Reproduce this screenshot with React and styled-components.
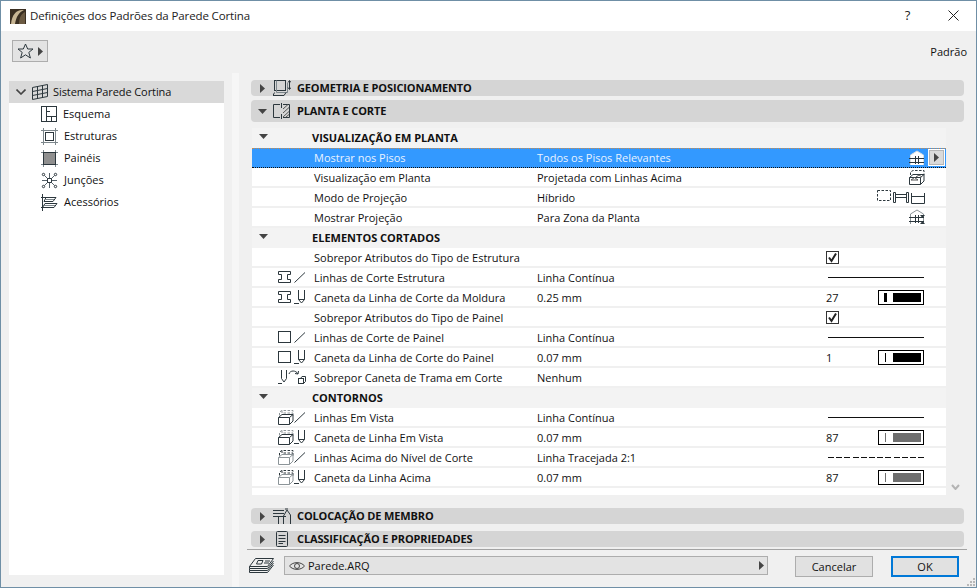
import React from "react";
import styled, { createGlobalStyle } from "styled-components";

const INK = "#2c373d";
const FONT = `"Open Sans", "Noto Sans", "Liberation Sans", sans-serif`;

const GlobalStyle = createGlobalStyle`
  html, body {
    margin: 0;
    padding: 0;
    background: #f0f0f0;
  }
  body {
    font-family: ${FONT};
    font-size: 11px;
    color: #111;
  }
`;

const Window = styled.div`
  width: 977px;
  height: 588px;
  box-sizing: border-box;
  border: 1px solid #6f8fa6;
  background: #f0f0f0;
  display: flex;
  flex-direction: column;
  overflow: hidden;
  position: relative;
`;
const TitleBar = styled.div`
  height: 30px;
  flex: none;
  background: #fff;
  display: flex;
  align-items: center;
  padding-left: 9px;
`;
const TitleText = styled.div`
  font-size: 11.5px;
  letter-spacing: -0.12px;
  margin-left: 4px;
  padding-bottom: 2px;
  flex: 1;
  color: #222;
`;
const HelpMark = styled.div`
  font-size: 13px;
  width: 46px;
  padding-left: 1px;
  padding-bottom: 2px;
  box-sizing: border-box;
  text-align: center;
  color: #222;
`;
const CloseMark = styled.div`
  width: 46px;
  display: flex;
  justify-content: center;
  padding-bottom: 2px;
`;
const Toolbar = styled.div`
  height: 42px;
  flex: none;
  display: flex;
  justify-content: space-between;
  padding: 9px 9px 0 11px;
  box-sizing: border-box;
`;
const FavButton = styled.div`
  width: 36px;
  height: 22px;
  box-sizing: border-box;
  border: 1px solid #adadad;
  background: #e3e3e3;
  display: flex;
  align-items: center;
  padding-left: 4px;
  gap: 4px;
`;
const DefaultLabel = styled.div`
  margin-top: 4px;
  font-size: 11px;
`;
const Main = styled.div`
  flex: 1;
  display: flex;
  padding-left: 8px;
  min-height: 0;
`;
const Sidebar = styled.div`
  width: 215px;
  flex: none;
  margin: 8px 0 12px;
  background: #fff;
`;
const TreeRow = styled.div`
  height: 22px;
  display: flex;
  align-items: center;
  box-sizing: border-box;
  padding-left: ${(p) => (p.$child ? "32px" : "7px")};
  background: ${(p) => (p.$root ? "#d9d9d9" : "transparent")};
  gap: ${(p) => (p.$child ? "6px" : "0")};
`;
const TreeLabel = styled.span`
  margin-left: ${(p) => (p.$root ? "5px" : "0")};
  letter-spacing: ${(p) => (p.$root ? "-0.08px" : "0")};
  padding-bottom: 2px;
`;
const Splitter = styled.div`
  width: 7px;
  margin-left: 8px;
  flex: none;
  background: #f6f6f6;
`;
const Content = styled.div`
  width: 720px;
  margin-left: 8px;
  padding-top: 7px;
  box-sizing: border-box;
  display: flex;
  flex-direction: column;
`;
const PanelHeader = styled.div`
  height: ${(p) => (p.$open ? "22px" : "16px")};
  margin: ${(p) => p.$margin || "0"};
  margin-left: 4px;
  width: 713px;
  flex: none;
  background: #d5d5d5;
  border-radius: 4px;
  display: flex;
  align-items: center;
  position: relative;
  font-weight: 700;
  font-size: 11px;
  color: #111;
`;
const HeaderArrow = styled.div`
  width: 22px;
  flex: none;
  display: flex;
  justify-content: center;
`;
const HeaderIcon = styled.div`
  width: 24px;
  flex: none;
  display: flex;
  justify-content: ${(p) => (p.$center ? "center" : "flex-start")};
  padding-right: ${(p) => (p.$center ? "6px" : "0")};
  box-sizing: border-box;
`;
const HeaderText = styled.span`
  letter-spacing: -0.13px;
  padding-bottom: 2px;
`;
const Table = styled.div`
  width: 694px;
  height: 367px;
  margin: 6px 0 13px 5px;
  flex: none;
  background: #fff;
`;
const SectionRow = styled.div`
  height: 20px;
  background: #f3f3f3;
  display: grid;
  grid-template-columns: 60px 1fr;
  align-items: center;
  font-weight: 700;
`;
const SectionArrow = styled.div`
  padding: 0 0 4px 7px;
  display: flex;
`;
const SectionText = styled.span`
  padding-bottom: 2px;
`;
const Row = styled.div`
  height: 20px;
  box-sizing: border-box;
  display: grid;
  grid-template-columns: 62px 223px 289px 52px 1fr;
  align-items: center;
  color: ${(p) => (p.$selected ? "#e9f3ff" : "#111")};
  background: ${(p) => (p.$selected ? "#3399ff" : "#fff")};
  border-bottom: ${(p) => (p.$selected ? "1px dotted #111" : "2px solid #f0f0f0")};
  border-top: ${(p) => (p.$selected ? "1px dotted #c98a4a" : "0")};
  position: relative;
  & > span {
    padding-bottom: ${(p) => (p.$selected ? "2px" : "0")};
  }
`;
const RowIcons = styled.div`
  display: flex;
  justify-content: flex-end;
  align-items: center;
  gap: ${(p) => (p.$tight ? "0" : "3px")};
  padding-right: 8px;
  height: 18px;
`;
const ExtraCell = styled.div`
  display: flex;
  align-items: center;
  height: 18px;
`;
const WideCell = styled.div`
  grid-column: 4 / 6;
  display: flex;
  justify-content: ${(p) => (p.$right ? "flex-end" : "flex-start")};
  align-items: center;
  gap: 2px;
  height: 18px;
  padding-right: ${(p) => (p.$right ? "21px" : "0")};
`;
const Checkbox = styled.div`
  width: 13px;
  height: 13px;
  box-sizing: border-box;
  border: 1px solid #333;
  background: #fff;
  display: flex;
  align-items: center;
  justify-content: center;
`;
const LineSample = styled.div`
  width: 96px;
  height: 1px;
  margin-left: 2px;
  background: ${(p) =>
    p.$dashed
      ? "repeating-linear-gradient(90deg, #111 0 6px, transparent 6px 8.2px)"
      : "#111"};
`;
const PenBox = styled.div`
  width: 46px;
  height: 15px;
  box-sizing: border-box;
  border: 1px solid #000;
  display: flex;
  align-items: center;
  padding: 0 2px 0 5px;
  background: #fff;
`;
const PenThin = styled.div`
  width: ${(p) => p.$w}px;
  margin-left: ${(p) => (p.$w === 1 ? "1px" : "0")};
  height: 9px;
  background: ${(p) => p.$color};
`;
const PenThick = styled.div`
  width: 28px;
  height: 9px;
  margin-left: auto;
  background: ${(p) => p.$color};
`;
const ExpandButton = styled.div`
  position: absolute;
  right: 1px;
  top: 0;
  width: 17px;
  height: 17px;
  box-sizing: border-box;
  background: #dadada;
  border: 1px solid #fff;
  outline: 1px solid #b5b5b5;
  outline-offset: -2px;
  display: flex;
  align-items: center;
  justify-content: center;
`;
const ScrollChevron = styled.div`
  position: absolute;
  left: 950px;
  top: 483px;
  display: flex;
`;
const Footer = styled.div`
  border-top: 1px solid #a3a3a3;
  margin-top: 2px;
  height: 37px;
  flex: none;
  display: flex;
  padding-top: 6px;
  box-sizing: border-box;
  align-items: flex-start;
`;
const LayerIcon = styled.div`
  width: 37px;
  padding-left: 2px;
  box-sizing: border-box;
  flex: none;
  margin-top: 2px;
`;
const LayerSelect = styled.div`
  width: 484px;
  height: 19px;
  box-sizing: border-box;
  border: 1px solid #adadad;
  background: #e3e3e3;
  display: flex;
  align-items: center;
  padding: 0 3px 0 4px;
  gap: 3px;
`;
const LayerName = styled.span`
  flex: 1;
  padding-bottom: 1px;
`;
const DialogButton = styled.div`
  height: 21px;
  box-sizing: border-box;
  width: ${(p) => p.$w}px;
  margin-left: ${(p) => p.$left}px;
  background: #e1e1e1;
  border: ${(p) => (p.$primary ? "2px solid #0078d7" : "1px solid #adadad")};
  display: flex;
  align-items: center;
  justify-content: center;
`;
const Grip = styled.div`
  position: absolute;
  right: 1px;
  bottom: 1px;
  display: flex;
`;

const Ic = ({ w, h, children, style }) => (
  <svg width={w} height={h} viewBox={`0 0 ${w} ${h}`} fill="none" stroke={INK} strokeWidth="1" style={{ display: "block", flex: "none", ...style }}>
    {children}
  </svg>
);

const TriRight = () => (
  <Ic w={5} h={9}><path d="M0 0L5 4.5L0 9Z" fill="#444" stroke="none" /></Ic>
);
const TriDown = () => (
  <Ic w={9} h={5}><path d="M0 0H9L4.5 5Z" fill="#444" stroke="none" /></Ic>
);

const Logo = () => (
  <svg width="16" height="15" viewBox="0 0 16 15" style={{ display: "block", flex: "none" }}>
    <rect width="16" height="15" fill="#3a2f22" />
    <path d="M1 15C2 6 6 1 12 1L14 1C9 3 6 8 5 15Z" fill="#c8b694" />
    <path d="M9 15C9 9 11 5 15 3V15Z" fill="#6b5a42" />
  </svg>
);

const Star = () => (
  <Ic w={17} h={16}>
    <path d="M8.5 1L10.7 6H16L11.8 9.4L13.4 15L8.5 11.8L3.6 15L5.2 9.4L1 6H6.3Z" />
  </Ic>
);

const WallIcon = () => (
  <Ic w={16} h={16}>
    <path d="M.5 3.5L15.5.5V12.5L.5 15.5Z" />
    <path d="M5.5 2.5V14.5M10.5 1.5V13.5M.5 7.5L15.5 4.5M.5 11.5L15.5 8.5" />
  </Ic>
);
const SchemeIcon = () => (
  <Ic w={16} h={16}>
    <rect x=".5" y=".5" width="15" height="15" />
    <path d="M5.5 .5V15.5M5.5 10.5H15.5M10.5 10.5V15.5M5.5 5.5H9" />
  </Ic>
);
const FrameIcon = () => (
  <Ic w={17} h={17}>
    <rect x="2.5" y="2.5" width="12" height="12" />
    <rect x="4.5" y="4.5" width="8" height="8" />
    <path d="M2.5 0V17M14.5 0V17M0 2.5H17M0 14.5H17" stroke="#7d878c" />
  </Ic>
);
const PanelIcon = () => (
  <Ic w={17} h={17}>
    <rect x="2.5" y="2.5" width="12" height="12" fill="#8f8f8f" />
    <path d="M2.5 0V2M14.5 0V2M2.5 15V17M14.5 15V17M0 2.5H2M15 2.5H17M0 14.5H2M15 14.5H17" stroke="#7d878c" />
  </Ic>
);
const JointIcon = () => (
  <Ic w={17} h={17}>
    <rect x="6.5" y="6.5" width="4" height="4" />
    <path d="M8.5 1V6M8.5 11V16M1 8.5H6M11 8.5H16M6.5 6.5L3.5 3.5M10.5 6.5L13.5 3.5M6.5 10.5L3.5 13.5M10.5 10.5L13.5 13.5" stroke="#56626a" />
    <circle cx="2.5" cy="2.5" r="1.2" />
    <circle cx="14.5" cy="2.5" r="1.2" />
    <circle cx="2.5" cy="14.5" r="1.2" />
    <circle cx="14.5" cy="14.5" r="1.2" />
  </Ic>
);
const AccessoryIcon = () => (
  <Ic w={17} h={17}>
    <path d="M1.5 0V17M0 3.5H15L12 7.5H3M3 7.5L5 3.5M0 13.5H13L16 9.5H4L1.5 13.5" />
    <path d="M4 5.5H13M3 11.5H14" stroke="#7d878c" />
  </Ic>
);
const GeoIcon = () => (
  <Ic w={18} h={16}>
    <rect x="1.5" y=".5" width="11" height="10" />
    <path d="M3.5 .5V12.5H14.5V3" stroke="#7d878c" />
    <path d="M1.5 12.5L0 15.5H11L13 12.5" />
    <path d="M16.5 1V9M15 2.5L16.5 .5L18 2.5M15 7.5L16.5 9.5L18 7.5" />
  </Ic>
);
const PlanIcon = () => (
  <Ic w={18} h={16}>
    <path d="M7 1.5H.5V14.5H7M10 1.5H16.5V14.5H10" />
    <path d="M8.5 0V5M8.5 11V16" />
    <path d="M10 6L15 1.5M10 10L16 4.5M10 14L16 8.5M13 14L16 11.5" stroke="#555" />
  </Ic>
);
const PlaceIcon = () => (
  <Ic w={20} h={16}>
    <path d="M0 2.5H11M0 5.5H11M0 8.5H13" />
    <path d="M5.5 8V16M10.5 8V16M17.5 7V16M10.5 8L14 2L17.5 7M12 1H15" />
  </Ic>
);
const DocIcon = () => (
  <Ic w={12} h={16}>
    <rect x=".5" y=".5" width="11" height="15" rx="1" />
    <path d="M2.5 4.5H9.5M2.5 7.5H9.5M2.5 10.5H9.5M2.5 12.5H7" />
  </Ic>
);
const LayersIcon = () => (
  <Ic w={25} h={15}>
    <path d="M.5 8.5L6.5 .5H24.5L18.5 8.5Z" />
    <path d="M9 2.5H14L12.5 6H7.5ZM16 3H21M15 5H20" />
    <path d="M.5 8.5V10.5L18.5 10.5L24.5 3M.5 10.5V12.5H18.5L24.5 5M.5 12.5V14.5H18.5L24.5 7" />
  </Ic>
);
const EyeIcon = () => (
  <Ic w={16} h={10}>
    <path d="M.5 5C4 .5 12 .5 15.5 5C12 9.5 4 9.5 .5 5Z" stroke="#444" />
    <circle cx="8" cy="5" r="2.5" stroke="#444" />
  </Ic>
);
const Beam = () => (
  <Ic w={13} h={12}>
    <path d="M.5 .5H12.5V3.5H9.5V8.5H12.5V11.5H.5V8.5H3.5V3.5H.5Z" />
  </Ic>
);
const Square = () => (
  <Ic w={13} h={12}><rect x=".5" y=".5" width="12" height="11" /></Ic>
);
const Slash = () => (
  <Ic w={12} h={11}><path d="M.5 10.5L11 .5" /></Ic>
);
const Pen = () => (
  <Ic w={12} h={15}>
    <path d="M4.5 0V9.5L7.5 13L10.5 9.5V0M4.5 9.5H10.5M0 13.5H5" />
  </Ic>
);
const PenSwap = () => (
  <Ic w={28} h={15}>
    <path d="M3.5 0V8.5L6 12L8.5 8.5V0M0 13.5H4" />
    <path d="M11 4C12 0 18 0 20 4M20 4L20.5 1M20 4L17 3.5" />
    <rect x="20.5" y="8.5" width="5" height="5" />
    <path d="M22.5 8.5L24 6.5H27.5V11.5L25.5 13.5" />
  </Ic>
);
const ViewBox = ({ top, bottom }) => (
  <Ic w={16} h={15}>
    <path d="M1.5 5.5V2L4 .5H15V6.5" stroke={top} strokeDasharray="2.5 1.5" />
    <path d="M4 .5V3H15" stroke={top} strokeDasharray="2.5 1.5" />
    <path d="M.5 7.5H11.5V14.5H.5ZM.5 7.5L4 4.5H15L11.5 7.5M15 4.5V11L11.5 14.5" stroke={bottom} />
  </Ic>
);
const HouseIcon = ({ fill, arrows, gray }) => (
  <Ic w={16} h={16}>
    <path d="M1.5 15V5L8 1L14.5 5V15" fill={fill} stroke={gray ? "#8c9498" : "#d8dde0"} />
    <path d="M0 8.5H15M0 12.5H15M6.5 6V14M9.5 6V14" />
    {arrows && <path d="M11 6H16L13.5 9ZM11 15H16L13.5 12Z" fill={INK} stroke="none" />}
  </Ic>
);
const DashedBoxIcon = () => (
  <Ic w={16} h={15}>
    <path d="M1.5 5V2L4 .5H15V5" strokeDasharray="2.5 1.5" />
    <path d="M.5 7.5H11.5V14.5H.5ZM.5 7.5L4 4.5H15L11.5 7.5M15 4.5V11L11.5 14.5" />
    <path d="M2 10L5.5 7.5L9 10ZM7 7L10 5L13 7" stroke="#555" />
  </Ic>
);
const DashedRect = () => (
  <Ic w={14} h={12} style={{ marginBottom: 3 }}>
    <rect x=".5" y=".5" width="13" height="10" strokeDasharray="2.5 1.5" />
  </Ic>
);
const BeamSide = () => (
  <Ic w={16} h={11} style={{ marginTop: 1 }}>
    <path d="M.5 .5V10.5H2.5V.5ZM13.5 .5V10.5H15.5V.5ZM2.5 2.5H13.5M2.5 5.5H13.5" />
  </Ic>
);
const OpenBox = () => (
  <Ic w={14} h={11} style={{ marginTop: 3 }}><path d="M.5 0V10.5H13.5V0M.5 3.5H13.5" /></Ic>
);
const CheckMark = () => (
  <Ic w={11} h={11}><path d="M2 5.5L4.5 9L9 1.5" stroke="#222" strokeWidth="2" /></Ic>
);

const GRAY_DASH = "#8c9498";
const VIEW = <ViewBox top={GRAY_DASH} bottom={INK} />;
const ABOVE = <ViewBox top={INK} bottom={GRAY_DASH} />;

const sections = [
  {
    title: "VISUALIZAÇÃO EM PLANTA",
    rows: [
      { name: "Mostrar nos Pisos", value: "Todos os Pisos Relevantes", selected: true, right: <HouseIcon fill="#fff" /> },
      { name: "Visualização em Planta", value: "Projetada com Linhas Acima", right: <DashedBoxIcon /> },
      { name: "Modo de Projeção", value: "Híbrido", right: <><DashedRect /><BeamSide /><OpenBox /></> },
      { name: "Mostrar Projeção", value: "Para Zona da Planta", right: <HouseIcon fill="#fff" arrows gray /> },
    ],
  },
  {
    title: "ELEMENTOS CORTADOS",
    rows: [
      { name: "Sobrepor Atributos do Tipo de Estrutura", check: true },
      { name: "Linhas de Corte Estrutura", value: "Linha Contínua", icons: <><Beam /><Slash /></>, line: true },
      { name: "Caneta da Linha de Corte da Moldura", value: "0.25 mm", icons: <><Beam /><Pen /></>, num: 27, pen: { w: 3, color: "#000" } },
      { name: "Sobrepor Atributos do Tipo de Painel", check: true },
      { name: "Linhas de Corte de Painel", value: "Linha Contínua", icons: <><Square /><Slash /></>, line: true },
      { name: "Caneta da Linha de Corte do Painel", value: "0.07 mm", icons: <><Square /><Pen /></>, num: 1, pen: { w: 1, color: "#000" } },
      { name: "Sobrepor Caneta de Trama em Corte", value: "Nenhum", icons: <PenSwap /> },
    ],
  },
  {
    title: "CONTORNOS",
    rows: [
      { name: "Linhas Em Vista", value: "Linha Contínua", tight: true, icons: <>{VIEW}<Slash /></>, line: true },
      { name: "Caneta de Linha Em Vista", value: "0.07 mm", tight: true, icons: <>{VIEW}<Pen /></>, num: 87, pen: { w: 1, color: "#6e6e6e" } },
      { name: "Linhas Acima do Nível de Corte", value: "Linha Tracejada 2:1", tight: true, icons: <>{ABOVE}<Slash /></>, line: true, dashed: true },
      { name: "Caneta da Linha Acima", value: "0.07 mm", tight: true, icons: <>{ABOVE}<Pen /></>, num: 87, pen: { w: 1, color: "#6e6e6e" } },
    ],
  },
];

const tree = [
  { label: "Esquema", icon: <SchemeIcon /> },
  { label: "Estruturas", icon: <FrameIcon /> },
  { label: "Painéis", icon: <PanelIcon /> },
  { label: "Junções", icon: <JointIcon /> },
  { label: "Acessórios", icon: <AccessoryIcon /> },
];

const PropertyRow = ({ row }) => (
  <Row $selected={row.selected}>
    <RowIcons $tight={row.tight}>{row.icons}</RowIcons>
    <span>{row.name}</span>
    <span>{row.value}</span>
    {row.check && (
      <ExtraCell>
        <Checkbox><CheckMark /></Checkbox>
      </ExtraCell>
    )}
    {row.line && (
      <WideCell>
        <LineSample $dashed={row.dashed} />
      </WideCell>
    )}
    {row.pen && (
      <>
        <span>{row.num}</span>
        <ExtraCell>
          <PenBox>
            <PenThin $w={row.pen.w} $color={row.pen.color} />
            <PenThick $color={row.pen.color} />
          </PenBox>
        </ExtraCell>
      </>
    )}
    {row.right && <WideCell $right>{row.right}</WideCell>}
    {row.selected && (
      <ExpandButton><TriRight /></ExpandButton>
    )}
  </Row>
);

export default function App() {
  return (
    <>
      <GlobalStyle />
      <Window>
        <TitleBar>
          <Logo />
          <TitleText>Definições dos Padrões da Parede Cortina</TitleText>
          <HelpMark>?</HelpMark>
          <CloseMark>
            <Ic w={11} h={11}><path d="M.5 .5L10.5 10.5M10.5 .5L.5 10.5" stroke="#222" /></Ic>
          </CloseMark>
        </TitleBar>
        <Toolbar>
          <FavButton>
            <Star />
            <TriRight />
          </FavButton>
          <DefaultLabel>Padrão</DefaultLabel>
        </Toolbar>
        <Main>
          <Sidebar>
            <TreeRow $root>
              <Ic w={10} h={6} style={{ marginRight: 6 }}>
                <path d="M.5 .5L5 5L9.5 .5" stroke="#444" strokeWidth="1.6" />
              </Ic>
              <WallIcon />
              <TreeLabel $root>Sistema Parede Cortina</TreeLabel>
            </TreeRow>
            {tree.map((t) => (
              <TreeRow $child key={t.label}>
                {t.icon}
                <TreeLabel>{t.label}</TreeLabel>
              </TreeRow>
            ))}
          </Sidebar>
          <Splitter />
          <Content>
            <PanelHeader>
              <HeaderArrow><TriRight /></HeaderArrow>
              <HeaderIcon><GeoIcon /></HeaderIcon>
              <HeaderText>GEOMETRIA E POSICIONAMENTO</HeaderText>
            </PanelHeader>
            <PanelHeader $open $margin="4px 0 0">
              <HeaderArrow><TriDown /></HeaderArrow>
              <HeaderIcon><PlanIcon /></HeaderIcon>
              <HeaderText>PLANTA E CORTE</HeaderText>
            </PanelHeader>
            <Table>
              {sections.map((s) => (
                <React.Fragment key={s.title}>
                  <SectionRow>
                    <SectionArrow><TriDown /></SectionArrow>
                    <SectionText>{s.title}</SectionText>
                  </SectionRow>
                  {s.rows.map((r) => (
                    <PropertyRow row={r} key={r.name} />
                  ))}
                </React.Fragment>
              ))}
            </Table>
            <PanelHeader>
              <HeaderArrow><TriRight /></HeaderArrow>
              <HeaderIcon><PlaceIcon /></HeaderIcon>
              <HeaderText>COLOCAÇÃO DE MEMBRO</HeaderText>
            </PanelHeader>
            <PanelHeader $margin="7px 0 0">
              <HeaderArrow><TriRight /></HeaderArrow>
              <HeaderIcon $center><DocIcon /></HeaderIcon>
              <HeaderText>CLASSIFICAÇÃO E PROPRIEDADES</HeaderText>
            </PanelHeader>
            <Footer>
              <LayerIcon><LayersIcon /></LayerIcon>
              <LayerSelect>
                <EyeIcon />
                <LayerName>Parede.ARQ</LayerName>
                <TriRight />
              </LayerSelect>
              <DialogButton $w={78} $left={27}>Cancelar</DialogButton>
              <DialogButton $w={68} $left={18} $primary>OK</DialogButton>
            </Footer>
          </Content>
        </Main>
        <ScrollChevron>
          <Ic w={9} h={6}><path d="M1 1L4.5 5L8 1" stroke="#b4b4b4" strokeWidth="2" /></Ic>
        </ScrollChevron>
        <Grip>
          <Ic w={9} h={9}>
            <path d="M7 1H9V3H7ZM4 4H6V6H4ZM7 4H9V6H7ZM1 7H3V9H1ZM4 7H6V9H4ZM7 7H9V9H7Z" fill="#b9b9b9" stroke="none" />
          </Ic>
        </Grip>
      </Window>
    </>
  );
}
